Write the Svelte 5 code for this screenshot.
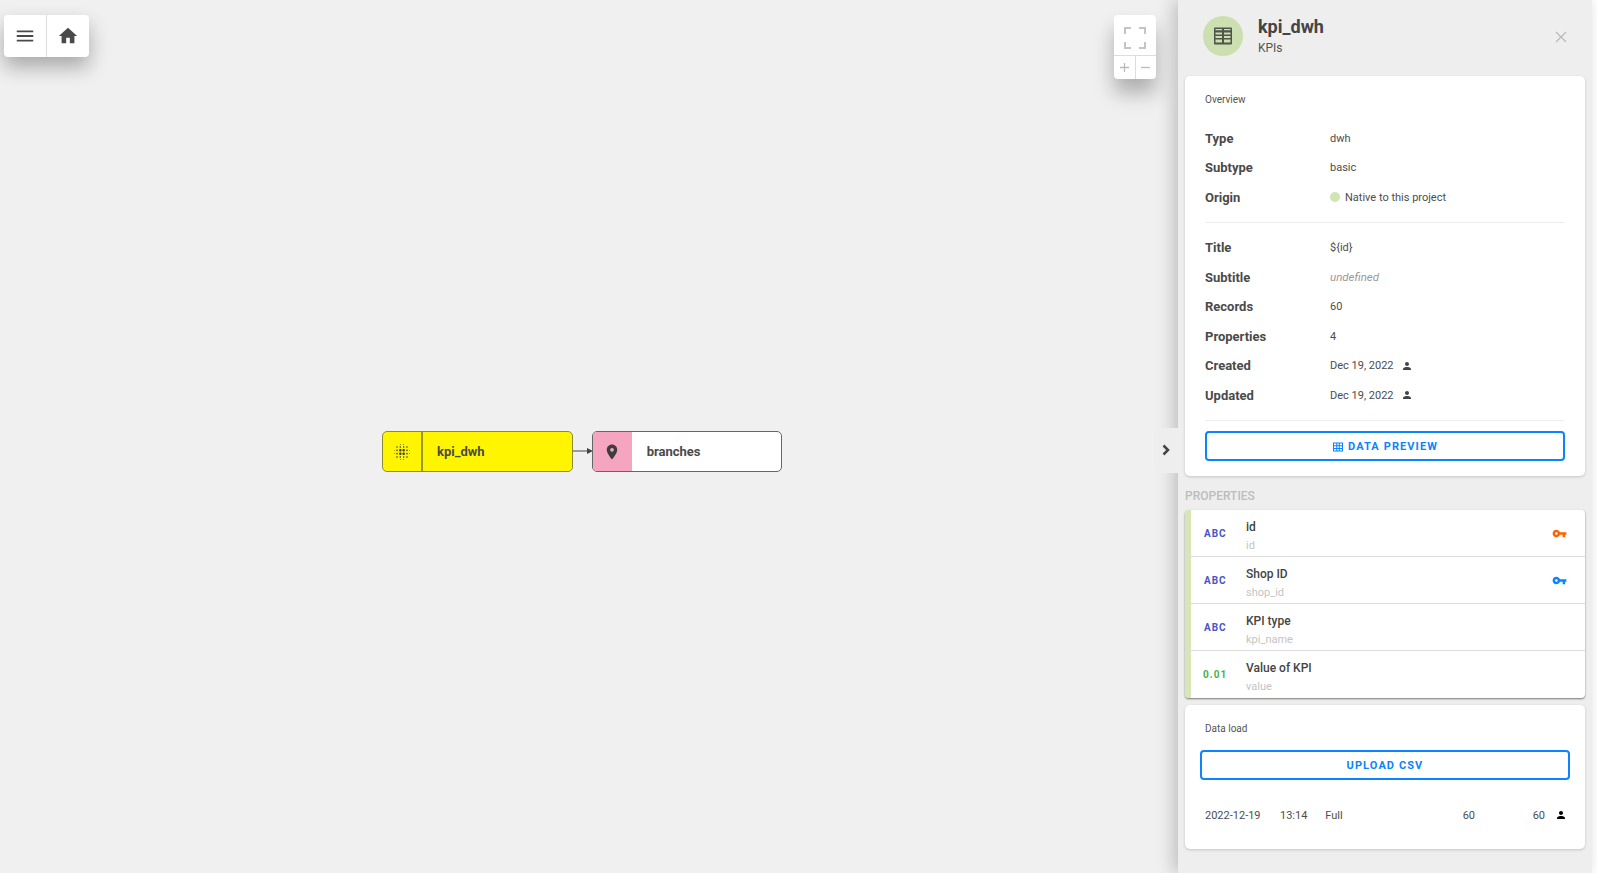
<script>
  const overview = [
    { label: 'Type', value: 'dwh' },
    { label: 'Subtype', value: 'basic' },
    { label: 'Origin', value: 'Native to this project', dot: true }
  ];
  const details = [
    { label: 'Title', value: '${id}' },
    { label: 'Subtitle', value: 'undefined', muted: true },
    { label: 'Records', value: '60' },
    { label: 'Properties', value: '4' },
    { label: 'Created', value: 'Dec 19, 2022', user: true },
    { label: 'Updated', value: 'Dec 19, 2022', user: true }
  ];
  const props = [
    { type: 'ABC', kind: 'str', name: 'id', code: 'id', key: 'primary' },
    { type: 'ABC', kind: 'str', name: 'Shop ID', code: 'shop_id', key: 'foreign' },
    { type: 'ABC', kind: 'str', name: 'KPI type', code: 'kpi_name' },
    { type: '0.01', kind: 'num', name: 'Value of KPI', code: 'value' }
  ];
  const blurOn = 'M6 13c-.55 0-1 .45-1 1s.45 1 1 1 1-.45 1-1-.45-1-1-1zm0 4c-.55 0-1 .45-1 1s.45 1 1 1 1-.45 1-1-.45-1-1-1zm0-8c-.55 0-1 .45-1 1s.45 1 1 1 1-.45 1-1-.45-1-1-1zm-3 .5c-.28 0-.5.22-.5.5s.22.5.5.5.5-.22.5-.5-.22-.5-.5-.5zM6 5c-.55 0-1 .45-1 1s.45 1 1 1 1-.45 1-1-.45-1-1-1zm15 5.500c.28 0 .5-.22.5-.5s-.22-.5-.5-.5-.5.22-.5.5.22.5.5.5zM14 7c.55 0 1-.45 1-1s-.45-1-1-1-1 .45-1 1 .45 1 1 1zm0-3.500c.28 0 .5-.22.5-.5s-.22-.5-.5-.5-.5.22-.5.5.22.5.5.5zm-11 10c-.28 0-.5.22-.5.5s.22.5.5.5.5-.22.5-.5-.22-.5-.5-.5zm7 7c-.28 0-.5.22-.5.5s.22.5.5.5.5-.22.5-.5-.22-.5-.5-.5zm0-17c.28 0 .5-.22.5-.5s-.22-.5-.5-.5-.5.22-.5.5.22.5.5.5zM10 7c.55 0 1-.45 1-1s-.45-1-1-1-1 .45-1 1 .45 1 1 1zm0 5.500c-.83 0-1.500.67-1.500 1.500s.67 1.500 1.500 1.500 1.500-.67 1.500-1.500-.67-1.500-1.500-1.500zm8 .5c-.55 0-1 .45-1 1s.45 1 1 1 1-.45 1-1-.45-1-1-1zm0 4c-.55 0-1 .45-1 1s.45 1 1 1 1-.45 1-1-.45-1-1-1zm0-8c-.55 0-1 .45-1 1s.45 1 1 1 1-.45 1-1-.45-1-1-1zm0-4c-.55 0-1 .45-1 1s.45 1 1 1 1-.45 1-1-.45-1-1-1zm3 8.500c-.28 0-.5.22-.5.5s.22.5.5.5.5-.22.5-.5-.22-.5-.5-.5zM14 17c-.55 0-1 .45-1 1s.45 1 1 1 1-.45 1-1-.45-1-1-1zm0 3.500c-.28 0-.5.22-.5.5s.22.5.5.5.5-.22.5-.5-.22-.5-.5-.5zm-4-12c-.83 0-1.500.67-1.500 1.500s.67 1.500 1.500 1.500 1.500-.67 1.500-1.500-.67-1.500-1.500-1.500zm0 8.500c-.55 0-1 .45-1 1s.45 1 1 1 1-.45 1-1-.45-1-1-1zm4-4.500c-.83 0-1.500.67-1.500 1.500s.67 1.500 1.500 1.500 1.500-.67 1.500-1.500-.67-1.500-1.500-1.500zm0-4c-.83 0-1.500.67-1.500 1.500s.67 1.500 1.500 1.500 1.500-.67 1.500-1.500-.67-1.500-1.500-1.500z';
  const person = 'M12 12c2.200 0 4-1.800 4-4s-1.800-4-4-4-4 1.800-4 4 1.800 4 4 4zm0 2c-2.700 0-8 1.300-8 4v2h16v-2c0-2.700-5.300-4-8-4z';
  const keyPath = 'M12.650 10C11.830 7.670 9.610 6 7 6c-3.310 0-6 2.690-6 6s2.690 6 6 6c2.610 0 4.830-1.670 5.650-4H17v4h4v-4h2v-4H12.650zM7 14c-1.100 0-2-.9-2-2s.9-2 2-2 2 .9 2 2-.9 2-2 2z';
</script>

<div class="page">
  <main class="canvas">
    <div class="toolbar">
      <button class="tool" aria-label="Menu">
        <svg viewBox="0 0 24 24" width="22" height="22"><path d="M3 18h18v-2H3v2zm0-5h18v-2H3v2zm0-7v2h18V6H3z" /></svg>
      </button>
      <button class="tool" aria-label="Home">
        <svg viewBox="0 0 24 24" width="22" height="22"><path d="M10 20v-6h4v6h5v-8h3L12 3 2 12h3v8z" /></svg>
      </button>
    </div>

    <div class="mapctl">
      <button class="fit" aria-label="Fit view">
        <svg viewBox="0 0 22 22" width="22" height="22"><path d="M1 7V1h6M15 1h6v6M21 15v6h-6M7 21H1v-6" /></svg>
      </button>
      <div class="zoom">
        <button aria-label="Zoom in"><svg viewBox="0 0 11 11" width="11" height="11"><path d="M5.500 1v9M1 5.500h9" /></svg></button>
        <button aria-label="Zoom out"><svg viewBox="0 0 11 11" width="11" height="11"><path d="M1 5.500h9" /></svg></button>
      </div>
    </div>

    <div class="node dwh">
      <span class="node-icon">
        <svg viewBox="0 0 24 24" width="20" height="20"><path d={blurOn} /></svg>
      </span>
      <span class="node-name">kpi_dwh</span>
    </div>
    <svg class="edge" width="20" height="8" viewBox="0 0 20 8"><path d="M0 4h15" /><path class="head" d="M14 1l6 3-6 3z" /></svg>
    <div class="node branch">
      <span class="node-icon">
        <svg viewBox="0 0 24 24" width="18" height="18"><path d="M12 2C8.100 2 5 5.100 5 9c0 5.200 7 13 7 13s7-7.800 7-13c0-3.900-3.100-7-7-7zm0 9.500a2.500 2.500 0 1 1 0-5 2.500 2.500 0 0 1 0 5z" /></svg>
      </span>
      <span class="node-name">branches</span>
    </div>
  </main>

  <aside class="side">
    <button class="collapse" aria-label="Collapse">
      <svg viewBox="0 0 10 12" width="10" height="12"><path d="M2.500 1.500 7 6l-4.500 4.500" /></svg>
    </button>
    <header class="head-row">
      <span class="avatar">
        <svg viewBox="0 0 24 24" width="24" height="24"><path fill-rule="evenodd" d="M4 3.500h16a1 1 0 0 1 1 1v15a1 1 0 0 1-1 1H4a1 1 0 0 1-1-1v-15a1 1 0 0 1 1-1zM4.500 5v1.300h6.500V5H4.500zm8.500 0v1.300h6.500V5H13zM4.500 8.500v2h6.500v-2H4.500zm8.500 0v2h6.500v-2H13zM4.500 12v2h6.500v-2H4.500zm8.500 0v2h6.500v-2H13zM4.500 15.500v3h6.500v-3H4.500zm8.500 0v3h6.500v-3H13z" /></svg>
      </span>
      <div class="titles">
        <h1>kpi_dwh</h1>
        <p>KPIs</p>
      </div>
      <button class="close" aria-label="Close">
        <svg viewBox="0 0 14 14" width="14" height="14"><path d="M2 2l10 10M12 2L2 12" /></svg>
      </button>
    </header>

    <div class="stack">
      <section class="card overview">
        <h2>Overview</h2>
        <dl class="group first">
          {#each overview as r}
            <div class="row">
              <dt>{r.label}</dt>
              <dd>{#if r.dot}<i class="dot"></i>{/if}{r.value}</dd>
            </div>
          {/each}
        </dl>
        <dl class="group second">
          {#each details as r}
            <div class="row">
              <dt>{r.label}</dt>
              <dd class:muted={r.muted}>
                {r.value}
                {#if r.user}<svg class="user" viewBox="0 0 24 24" width="12" height="12"><path d={person} /></svg>{/if}
              </dd>
            </div>
          {/each}
        </dl>
        <div class="action">
          <button class="outline">
            <svg viewBox="0 0 24 24" width="12" height="12"><path d="M2 3h20v18H2V3zm2 2v3.500h4.500V5H4zm6.500 0v3.500h3V5h-3zm5 0v3.500H20V5h-4.500zM4 10.500v3.500h4.500v-3.500H4zm6.500 0v3.500h3v-3.500h-3zm5 0v3.500H20v-3.500h-4.500zM4 16v3h4.500v-3H4zm6.500 0v3h3v-3h-3zm5 0v3H20v-3h-4.500z" /></svg>
            DATA PREVIEW
          </button>
        </div>
      </section>

      <div class="section-label">PROPERTIES</div>

      <section class="list">
        {#each props as p}
          <div class="prop">
            <span class="ptype {p.kind}">{p.type}</span>
            <div class="pnames">
              <span class="pname">{p.name}</span>
              <span class="pcode">{p.code}</span>
            </div>
            {#if p.key}
              <svg class="pkey {p.key}" viewBox="0 0 24 24" width="15" height="15"><path d={keyPath} /></svg>
            {/if}
          </div>
        {/each}
      </section>

      <section class="card load">
        <h2>Data load</h2>
        <button class="outline wide">UPLOAD CSV</button>
        <div class="load-row">
          <span class="date">2022-12-19</span>
          <span class="time">13:14</span>
          <span class="mode">Full</span>
          <span class="n1">60</span>
          <span class="n2">60</span>
          <svg viewBox="0 0 24 24" width="12" height="12"><path d={person} /></svg>
        </div>
      </section>
    </div>
  </aside>
</div>

<style>
  :global(body) {
    margin: 0;
    background: #fff;
    font-family: Roboto, "Liberation Sans", sans-serif;
    color: #444;
    overflow: hidden;
  }
  button {
    font-family: inherit;
    cursor: pointer;
    padding: 0;
  }
  .page {
    display: flex;
    height: 873px;
    background: #fff;
  }
  .canvas {
    position: relative;
    flex: 1;
    background: #f0f0f0;
  }
  .toolbar {
    position: absolute;
    left: 4px;
    top: 15px;
    display: flex;
    background: #fff;
    border-radius: 4px;
    box-shadow: 0 10px 20px rgba(0, 0, 0, 0.3);
  }
  .tool {
    width: 42px;
    height: 42px;
    border: 0;
    background: none;
    display: flex;
    align-items: center;
    justify-content: center;
    fill: #4a4a4a;
  }
  .tool:first-child {
    width: 43px;
    border-right: 1px solid #ddd;
  }
  .mapctl {
    position: absolute;
    left: 1114px;
    top: 15px;
    width: 42px;
    background: #fff;
    border-radius: 4px;
    box-shadow: 0 14px 20px rgba(0, 0, 0, 0.28);
  }
  .fit {
    display: flex;
    align-items: center;
    justify-content: center;
    width: 42px;
    height: 41px;
    padding-top: 5px;
    box-sizing: border-box;
    background: none;
    border: 0;
    border-bottom: 1px solid #ddd;
  }
  .fit path {
    fill: none;
    stroke: #c4c4c4;
    stroke-width: 2;
  }
  .zoom {
    display: flex;
    height: 23px;
  }
  .zoom button {
    flex: 1;
    background: none;
    border: 0;
    display: flex;
    align-items: center;
    justify-content: center;
  }
  .zoom button:first-child { border-right: 1px solid #ddd; }
  .zoom path { stroke: #bbb; stroke-width: 1.300; fill: none; }
  .node {
    position: absolute;
    top: 431px;
    box-sizing: border-box;
    height: 41px;
    width: 190.800px;
    display: flex;
    border: 1px solid #666;
    border-radius: 5px;
    overflow: hidden;
    font-size: 13px;
    font-weight: 700;
    color: #4a4a4a;
  }
  .node-icon {
    width: 40px;
    display: flex;
    align-items: center;
    justify-content: center;
    box-sizing: border-box;
    fill: #3d3d3d;
  }
  .node-name {
    display: flex;
    align-items: center;
    padding-left: 14px;
  }
  .dwh {
    left: 382px;
    background: #fff500;
    border-color: #8d8a3a;
  }
  .dwh .node-icon { border-right: 2px solid #9a9720; }
  .branch {
    left: 591.700px;
    background: #fff;
  }
  .branch .node-icon { background: #f6a5c0; width: 39px; }
  .branch .node-name { padding-left: 15px; }
  .edge {
    position: absolute;
    left: 572.500px;
    top: 447px;
  }
  .edge path { stroke: #444; stroke-width: 1; fill: none; }
  .edge .head { fill: #444; stroke: none; }
  .collapse {
    position: absolute;
    left: -24px;
    top: 428px;
    width: 24px;
    height: 45px;
    background: #eee;
    border: 0;
    border-radius: 4px 0 0 4px;
    display: flex;
    align-items: center;
    justify-content: center;
    padding-bottom: 2px;
    box-sizing: border-box;
  }
  .collapse path { fill: none; stroke: #444; stroke-width: 2.500; }
  .side {
    width: 414px;
    margin-right: 5px;
    box-sizing: border-box;
    height: 873px;
    padding: 0 7px;
    background: #eee;
    box-shadow: -5px 0 16px rgba(0, 0, 0, 0.2);
    position: relative;
  }
  .head-row {
    display: flex;
    align-items: flex-start;
    height: 76px;
    padding-left: 18px;
    box-sizing: border-box;
  }
  .avatar {
    width: 40px;
    height: 40px;
    margin-top: 16px;
    border-radius: 50%;
    background: #cbdfb0;
    display: flex;
    align-items: center;
    justify-content: center;
    fill: #50544a;
  }
  .titles { margin-left: 15px; margin-top: 16px; }
  h1 {
    margin: 0;
    font-size: 18px;
    line-height: 22px;
    font-weight: 700;
    color: #444;
  }
  .titles p {
    margin: 3px 0 0;
    font-size: 12px;
    line-height: 14px;
    color: #555;
  }
  .close {
    margin-left: auto;
    margin-right: 17px;
    margin-top: 30px;
    border: 0;
    background: none;
    display: flex;
  }
  .close path { stroke: #bbb; stroke-width: 1.400; fill: none; }
  .card {
    background: #fff;
    border-radius: 5px;
    box-shadow: 0 1px 3px rgba(0, 0, 0, 0.18);
    box-sizing: border-box;
    padding: 0 20px;
  }
  h2 {
    margin: 0;
    font-size: 10px;
    font-weight: 400;
    color: #555;
    line-height: 14px;
  }
  .overview {
    height: 400px;
    padding-top: 17px;
  }
  dl { margin: 0; }
  .group.first { padding-top: 16.800px; padding-bottom: 10.200px; border-bottom: 1px solid #eee; }
  .group.second { padding-top: 9.900px; padding-bottom: 10px; border-bottom: 1px solid #eee; }
  .group.second .row { height: 29.500px; }
  .row {
    display: flex;
    align-items: center;
    height: 29.400px;
  }
  dt {
    width: 125px;
    font-size: 13px;
    font-weight: 700;
    color: #4a4a4a;
    flex: none;
  }
  dd {
    margin: 0;
    font-size: 11px;
    color: #4d4d4d;
    display: flex;
    align-items: center;
  }
  dd.muted {
    color: #999;
    font-style: italic;
    font-size: 11.500px;
  }
  .dot {
    width: 10px;
    height: 10px;
    border-radius: 50%;
    background: #cfe5b4;
    margin-right: 5px;
  }
  .user { margin-left: 7.500px; fill: #444; }
  .action { padding-top: 10px; }
  .outline {
    width: 100%;
    height: 30px;
    background: #fff;
    border: 2px solid #0a84ff;
    border-radius: 4px;
    color: #0a84ff;
    font-size: 11px;
    font-weight: 700;
    letter-spacing: 1.100px;
    display: flex;
    align-items: center;
    justify-content: center;
    gap: 3px;
    padding-top: 1px;
    box-sizing: border-box;
  }
  .outline svg { fill: #0a84ff; margin-right: 1px; }
  .section-label {
    font-size: 12px;
    color: #bdbdbd;
    font-weight: 500;
    height: 34px;
    line-height: 20px;
    padding-top: 10px;
    box-sizing: border-box;
  }
  .list {
    background: #fff;
    border-radius: 4px;
    box-shadow: 0 1px 2px rgba(0, 0, 0, 0.5);
    overflow: hidden;
  }
  .prop {
    height: 47px;
    box-sizing: border-box;
    border-left: 6px solid #d6e6b6;
    border-bottom: 1px solid #ddd;
    display: flex;
    align-items: center;
    padding-right: 18px;
  }
  .prop:last-child { border-bottom: 0; }
  .ptype {
    width: 55px;
    box-sizing: border-box;
    padding-left: 13px;
    font-size: 10px;
    font-weight: 700;
    letter-spacing: 1px;
  }
  .ptype.str { color: #4a55c8; }
  .ptype.num { color: #48b24f; padding-left: 12px; }
  .pnames {
    flex: 1;
    display: flex;
    flex-direction: column;
    padding-top: 5px;
  }
  .pname { font-size: 12px; line-height: 16px; color: #444; font-weight: 500; }
  .pcode { font-size: 11px; line-height: 14px; margin-top: 4px; color: #c4c4c4; }
  .pkey.primary { fill: #ff6200; }
  .pkey.foreign { fill: #0a84ff; }
  .load {
    margin-top: 7px;
    height: 144px;
    padding-top: 17px;
  }
  .wide {
    width: 370px;
    margin: 14px 0 0 -5px;
  }
  .load-row {
    display: flex;
    align-items: center;
    font-size: 11px;
    color: #4d4d4d;
    margin-top: 27px;
    height: 16px;
  }
  .load-row > * { flex: none; }
  .date { width: 75px; }
  .time { width: 45.300px; }
  .mode { width: 137.400px; }
  .n1 { width: 70px; }
  .n2 { width: 13px; margin-right: 9.300px; }
</style>
